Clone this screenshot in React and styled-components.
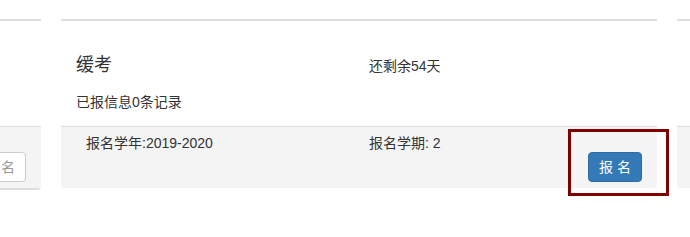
import React from "react";
import styled, { createGlobalStyle } from "styled-components";

const Global = createGlobalStyle`
  html { overflow: hidden; }
  html, body { margin: 0; padding: 0; background: #fff; min-height: 100%; }
  body { min-height: 237px; font-family: "Liberation Sans", "Noto Sans CJK SC", sans-serif; color: #333; }
`;

const Track = styled.div`
  display: flex;
  gap: 20px;
  margin-left: -555px;
  padding-top: 19px;
  padding-bottom: 41px;
  width: max-content;
`;

const Card = styled.div`
  position: relative;
  width: 596px;
  flex: none;
  align-self: flex-start;
  background: #fff;
  border-top: 2px solid #dddddd;
  border-bottom: ${(p) => (p.$underlined ? "2px solid #dddddd" : "none")};
  border-radius: 0 0 4px 4px;
`;

const Body = styled.div`
  height: 59px;
  padding: 32px 15px 14px 15px;
`;

const TitleRow = styled.div`
  display: grid;
  grid-template-columns: 293px 1fr;
  align-items: baseline;
`;

const Title = styled.div`
  font-size: 18px;
  line-height: 24px;
`;

const Text = styled.div`
  font-size: 14px;
  line-height: 20px;
`;

const Count = styled(Text)`
  margin-top: 15px;
`;

const Footer = styled.div`
  display: grid;
  grid-template-columns: 283px 1fr auto;
  align-items: start;
  min-height: 49px;
  padding: 6px 15px 6px 25px;
  background: #f4f4f4;
  border-top: 1px solid #dddddd;
  border-radius: 0 0 4px 4px;
`;

const Button = styled.button`
  grid-column: 3;
  margin-top: 19px;
  height: 30px;
  padding: 0 10px;
  font-family: "Liberation Sans", "Noto Sans CJK SC", sans-serif;
  font-size: 14px;
  line-height: 28px;
  border-radius: 4px;
  cursor: pointer;
  color: ${(p) => (p.$muted ? "#999" : "#fff")};
  background: ${(p) => (p.$muted ? "#fff" : "#337ab7")};
  border: 1px solid ${(p) => (p.$muted ? "#cccccc" : "#2e6da4")};
`;

const Highlight = styled.div`
  position: absolute;
  z-index: 5;
  left: 507px;
  top: 108px;
  width: 101px;
  height: 67px;
  box-sizing: border-box;
  border: 3px solid #800000;
  pointer-events: none;
`;

function ExamCard({ exam }) {
  return (
    <Card $underlined={exam.underlined}>
      <Body>
        {exam.name && (
          <>
            <TitleRow>
              <Title>{exam.name}</Title>
              <Text>{exam.left}</Text>
            </TitleRow>
            <Count>已报信息{exam.count}条记录</Count>
          </>
        )}
      </Body>
      <Footer>
        {exam.year && <Text>报名学年:{exam.year}</Text>}
        {exam.term && <Text>报名学期: {exam.term}</Text>}
        {exam.button && <Button $muted={exam.muted}>报 名</Button>}
      </Footer>
      {exam.highlight && <Highlight />}
    </Card>
  );
}

const exams = [
  { button: true, muted: true, underlined: true },
  {
    name: "缓考",
    left: "还剩余54天",
    count: 0,
    year: "2019-2020",
    term: 2,
    button: true,
    highlight: true,
  },
  {},
];

export default function App() {
  return (
    <>
      <Global />
      <Track>
        {exams.map((e, i) => (
          <ExamCard key={i} exam={e} />
        ))}
      </Track>
    </>
  );
}
